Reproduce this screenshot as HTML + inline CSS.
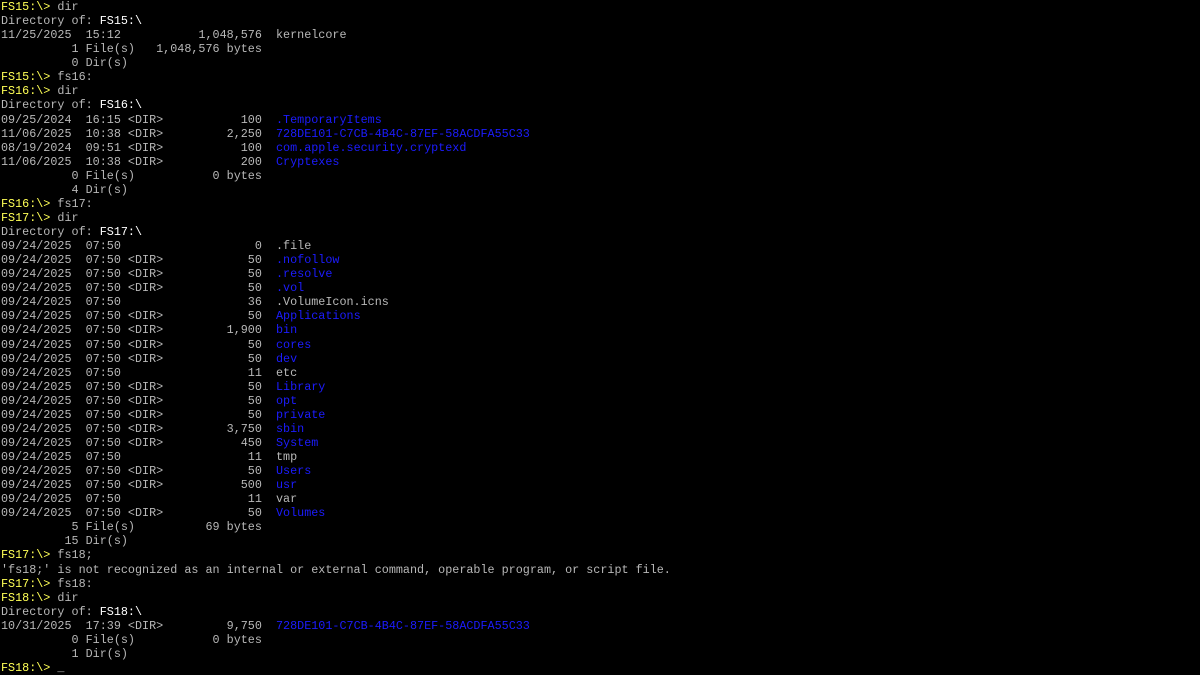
<!DOCTYPE html>
<html><head><meta charset="utf-8"><style>
html,body{margin:0;padding:0;background:#000;width:1200px;height:675px;overflow:hidden}
pre{margin:0;padding:0 0 0 1px;font-family:"Liberation Mono","DejaVu Sans Mono",monospace;font-size:11.75px;line-height:14.06px;color:#b8b8b8;white-space:pre}
.y{color:#ffff55}.w{color:#fff}.b{color:#1c1cff}
</style></head><body><pre><span class="y">FS15:\&gt;</span> dir
Directory of: <span class="w">FS15:\</span>
11/25/2025  15:12           1,048,576  kernelcore
          1 File(s)   1,048,576 bytes
          0 Dir(s)
<span class="y">FS15:\&gt;</span> fs16:
<span class="y">FS16:\&gt;</span> dir
Directory of: <span class="w">FS16:\</span>
09/25/2024  16:15 &lt;DIR&gt;           100  <span class="b">.TemporaryItems</span>
11/06/2025  10:38 &lt;DIR&gt;         2,250  <span class="b">728DE101-C7CB-4B4C-87EF-58ACDFA55C33</span>
08/19/2024  09:51 &lt;DIR&gt;           100  <span class="b">com.apple.security.cryptexd</span>
11/06/2025  10:38 &lt;DIR&gt;           200  <span class="b">Cryptexes</span>
          0 File(s)           0 bytes
          4 Dir(s)
<span class="y">FS16:\&gt;</span> fs17:
<span class="y">FS17:\&gt;</span> dir
Directory of: <span class="w">FS17:\</span>
09/24/2025  07:50                   0  .file
09/24/2025  07:50 &lt;DIR&gt;            50  <span class="b">.nofollow</span>
09/24/2025  07:50 &lt;DIR&gt;            50  <span class="b">.resolve</span>
09/24/2025  07:50 &lt;DIR&gt;            50  <span class="b">.vol</span>
09/24/2025  07:50                  36  .VolumeIcon.icns
09/24/2025  07:50 &lt;DIR&gt;            50  <span class="b">Applications</span>
09/24/2025  07:50 &lt;DIR&gt;         1,900  <span class="b">bin</span>
09/24/2025  07:50 &lt;DIR&gt;            50  <span class="b">cores</span>
09/24/2025  07:50 &lt;DIR&gt;            50  <span class="b">dev</span>
09/24/2025  07:50                  11  etc
09/24/2025  07:50 &lt;DIR&gt;            50  <span class="b">Library</span>
09/24/2025  07:50 &lt;DIR&gt;            50  <span class="b">opt</span>
09/24/2025  07:50 &lt;DIR&gt;            50  <span class="b">private</span>
09/24/2025  07:50 &lt;DIR&gt;         3,750  <span class="b">sbin</span>
09/24/2025  07:50 &lt;DIR&gt;           450  <span class="b">System</span>
09/24/2025  07:50                  11  tmp
09/24/2025  07:50 &lt;DIR&gt;            50  <span class="b">Users</span>
09/24/2025  07:50 &lt;DIR&gt;           500  <span class="b">usr</span>
09/24/2025  07:50                  11  var
09/24/2025  07:50 &lt;DIR&gt;            50  <span class="b">Volumes</span>
          5 File(s)          69 bytes
         15 Dir(s)
<span class="y">FS17:\&gt;</span> fs18;
'fs18;' is not recognized as an internal or external command, operable program, or script file.
<span class="y">FS17:\&gt;</span> fs18:
<span class="y">FS18:\&gt;</span> dir
Directory of: <span class="w">FS18:\</span>
10/31/2025  17:39 &lt;DIR&gt;         9,750  <span class="b">728DE101-C7CB-4B4C-87EF-58ACDFA55C33</span>
          0 File(s)           0 bytes
          1 Dir(s)
<span class="y">FS18:\&gt;</span> _</pre></body></html>
